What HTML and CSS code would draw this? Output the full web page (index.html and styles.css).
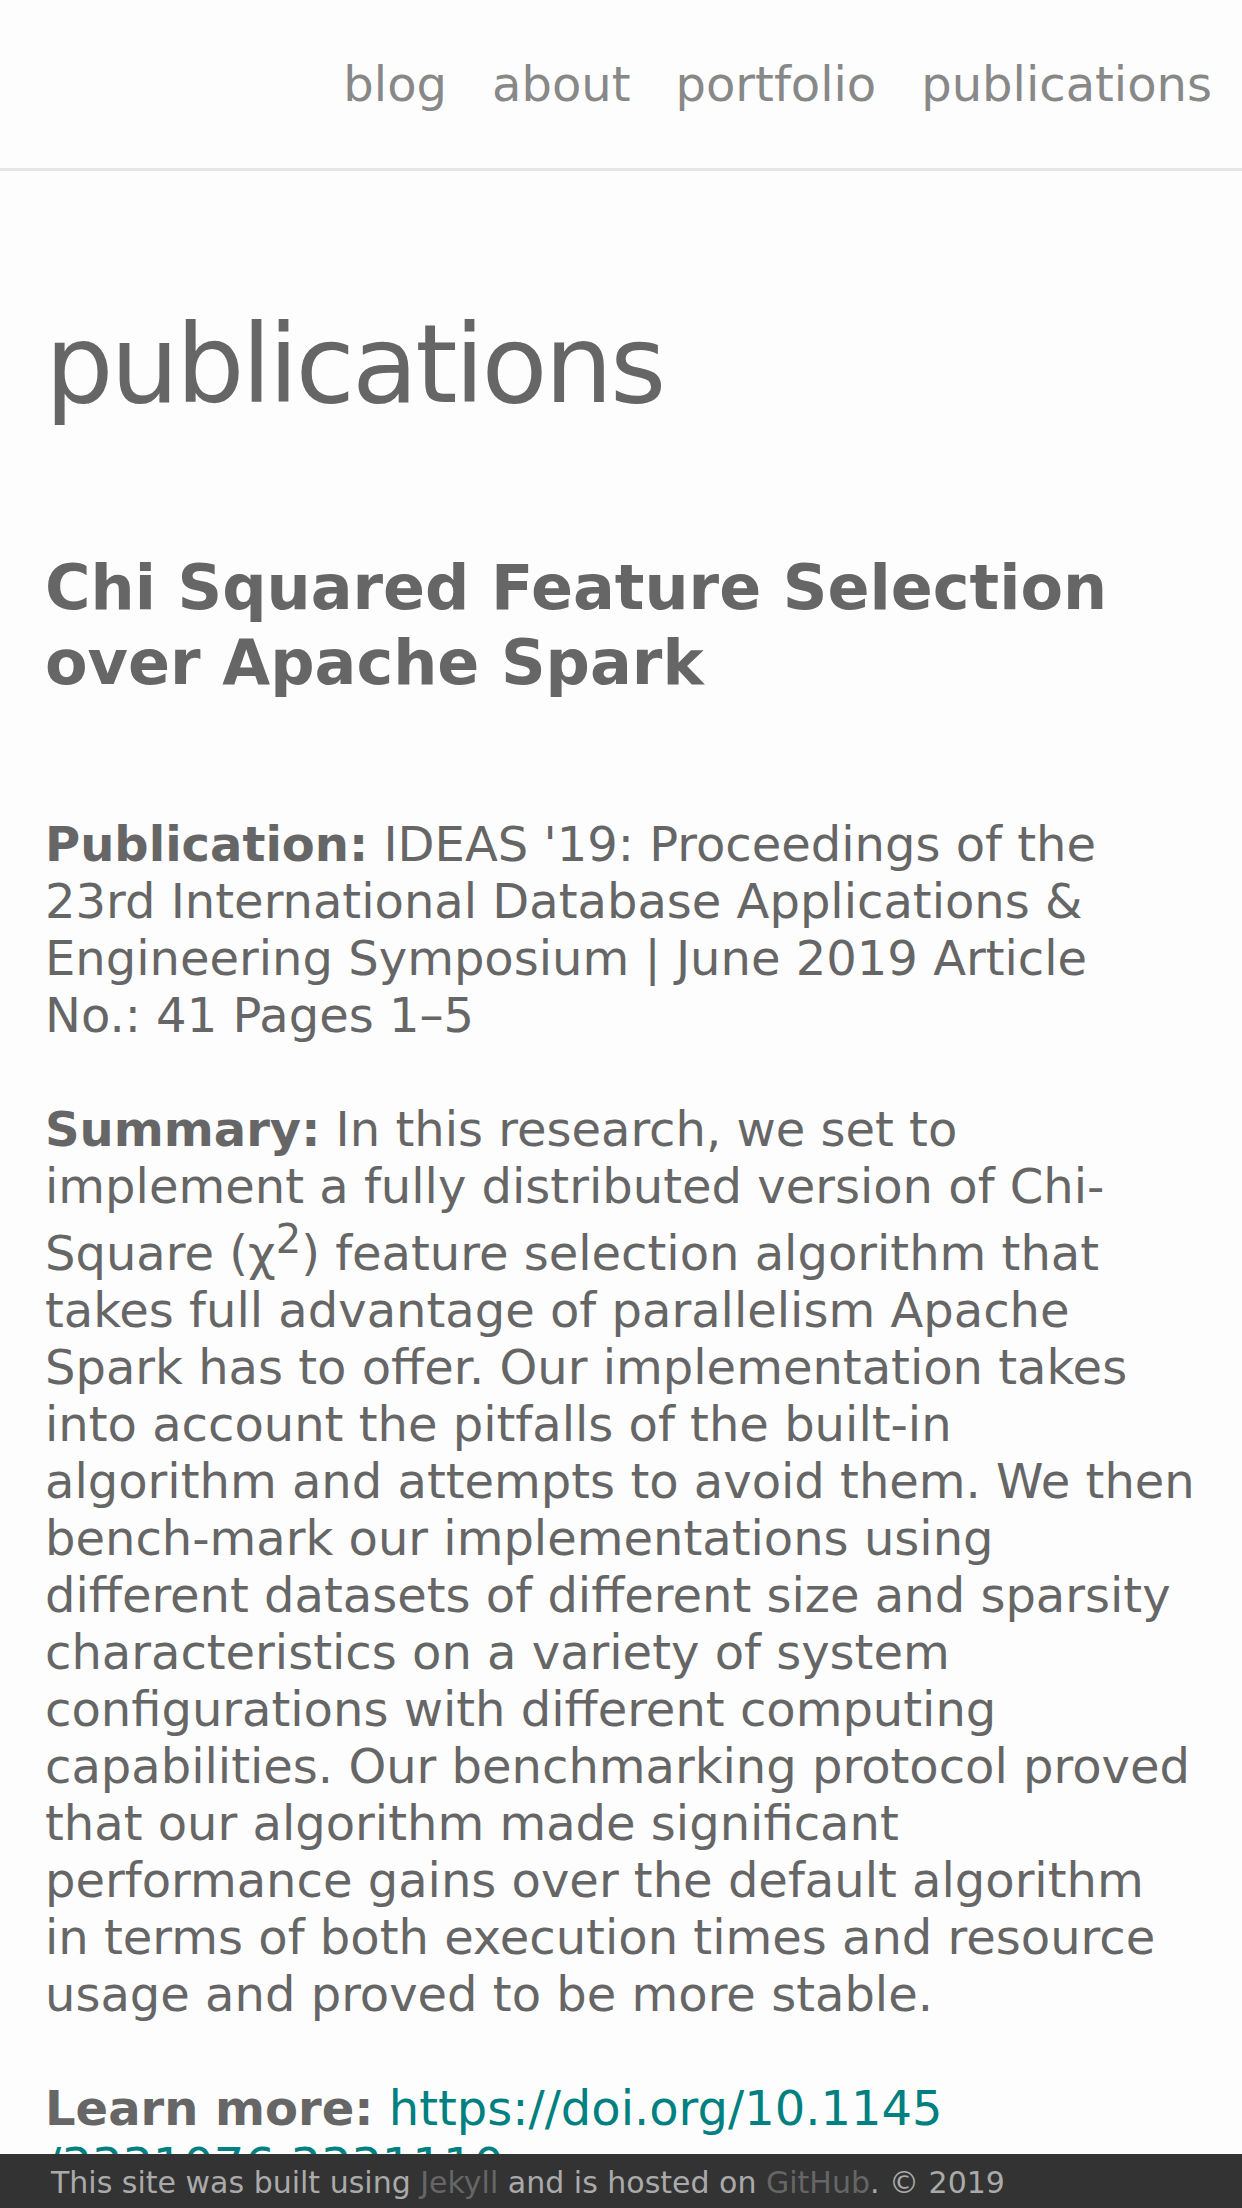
FILE: index.html
```html
<!DOCTYPE html>
<html lang="en">
<head>
<meta charset="utf-8">
<meta name="viewport" content="width=device-width, initial-scale=1">
<title>publications</title>
<link rel="stylesheet" href="styles.css">
</head>
<body>
<nav class="nav">
<ul class="nav-list">
<li><a href="#blog">blog</a></li>
<li><a href="#about">about</a></li>
<li><a href="#portfolio">portfolio</a></li>
<li><a href="#publications">publications</a></li>
</ul>
</nav>
<main class="content">
<h1 class="page-title">publications</h1>
<article class="paper">
<h2 class="paper-title">Chi Squared Feature Selection over Apache Spark</h2>
<p><strong>Publication:</strong> IDEAS '19: Proceedings of the 23rd International Database Applications &amp; Engineering Symposium | June 2019 Article No.: 41 Pages 1–5</p>
<p><strong>Summary:</strong> In this research, we set to implement a fully distributed version of Chi-Square (χ<sup>2</sup>) feature selection algorithm that takes full advantage of parallelism Apache Spark has to offer. Our implementation takes into account the pitfalls of the built-in algorithm and attempts to avoid them. We then bench-mark our implementations using different datasets of different size and sparsity characteristics on a variety of system configurations with different computing capabilities. Our benchmarking protocol proved that our algorithm made significant performance gains over the default algorithm in terms of both execution times and resource usage and proved to be more stable.</p>
<p><strong>Learn more:</strong> <a class="doi" href="https://doi.org/10.1145/3331076.3331110">https://doi.org/10.1145<wbr>/3331076.3331110</a></p>
</article>
</main>
<footer class="footer">This site was built using <a href="#jekyll">Jekyll</a> and is hosted on <a href="#github">GitHub</a>. © 2019</footer>
</body>
</html>
```
FILE: styles.css
```css
* {
  box-sizing: border-box;
}

html {
  scrollbar-width: none;
}

body {
  margin: 0;
  background: #fdfdfd;
  color: #666;
  font-family: "DejaVu Sans", sans-serif;
  font-size: 48px;
  line-height: 57px;
}

a {
  text-decoration: none;
}

.nav {
  padding: 56px 30px 55px;
  border-bottom: 3px solid #e5e5e5;
}

.nav-list {
  display: flex;
  justify-content: flex-end;
  gap: 45px;
  margin: 0;
  padding: 0;
  list-style: none;
}

.nav a {
  color: #888;
}

.content {
  padding: 129px 45px 120px;
}

.page-title {
  margin: 0 0 120px;
  font-size: 108px;
  font-weight: 400;
  line-height: 130px;
  letter-spacing: -3px;
}

.paper-title {
  margin: 0 0 116px;
  font-size: 62px;
  line-height: 75px;
}

p {
  margin: 0 0 57px;
}

sup {
  line-height: 49px;
}

.doi {
  color: #008080;
}

.footer {
  position: fixed;
  right: 0;
  bottom: 0;
  left: 0;
  padding: 10px 51px 6px;
  background: #333;
  color: #aaa;
  font-size: 30px;
  line-height: 38px;
}

.footer a {
  color: #666;
}
```
